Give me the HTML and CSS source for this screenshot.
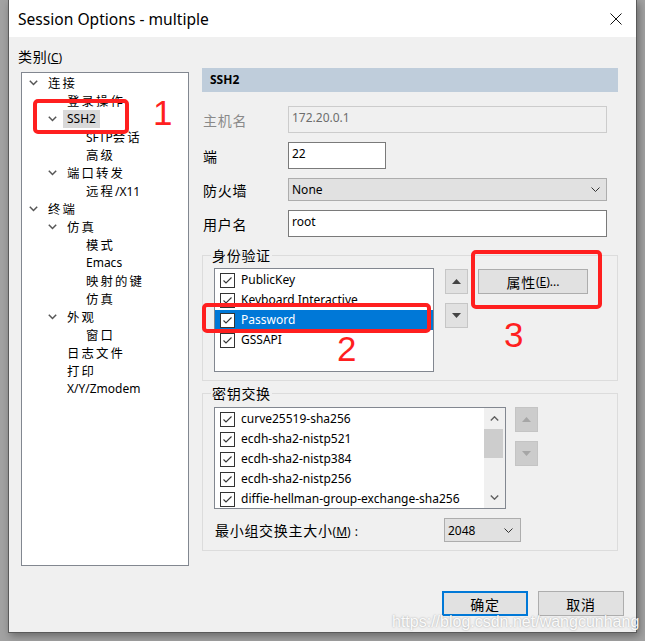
FILE: index.html
```html
<!DOCTYPE html>
<html>
<head>
<meta charset="utf-8">
<link rel="stylesheet" href="styles.css">
</head>
<body>
<div class="dialog">
  <div class="titlebar">
    <span class="title">Session Options - multiple</span>
    <svg class="close" width="12" height="12" viewBox="0 0 12 12"><path d="M0.5 0.5L11.5 11.5M11.5 0.5L0.5 11.5" stroke="#111" stroke-width="1" fill="none"/></svg>
  </div>
  <div class="content">
    <div class="main">
      <div class="leftcol">
        <div class="catlabel"><span class="zh">类别</span>(<u>C</u>)</div>
        <div class="tree">
          <div class="node l0"><span class="tog"><svg width="9" height="6" viewBox="0 0 9 6"><polyline points="0.8,0.8 4.5,4.5 8.2,0.8" fill="none" stroke="#555" stroke-width="1.5"/></svg></span><span class="txt zh">连接</span></div>
          <div class="node l1"><span class="tog"></span><span class="txt zh">登录操作</span></div>
          <div class="node l1"><span class="tog"><svg width="9" height="6" viewBox="0 0 9 6"><polyline points="0.8,0.8 4.5,4.5 8.2,0.8" fill="none" stroke="#555" stroke-width="1.5"/></svg></span><span class="txt sel">SSH2</span></div>
          <div class="node l2"><span class="tog"></span><span class="txt">SFTP<span class="zh">会话</span></span></div>
          <div class="node l2"><span class="tog"></span><span class="txt zh">高级</span></div>
          <div class="node l1"><span class="tog"><svg width="9" height="6" viewBox="0 0 9 6"><polyline points="0.8,0.8 4.5,4.5 8.2,0.8" fill="none" stroke="#555" stroke-width="1.5"/></svg></span><span class="txt zh">端口转发</span></div>
          <div class="node l2"><span class="tog"></span><span class="txt"><span class="zh">远程</span>/X11</span></div>
          <div class="node l0"><span class="tog"><svg width="9" height="6" viewBox="0 0 9 6"><polyline points="0.8,0.8 4.5,4.5 8.2,0.8" fill="none" stroke="#555" stroke-width="1.5"/></svg></span><span class="txt zh">终端</span></div>
          <div class="node l1"><span class="tog"><svg width="9" height="6" viewBox="0 0 9 6"><polyline points="0.8,0.8 4.5,4.5 8.2,0.8" fill="none" stroke="#555" stroke-width="1.5"/></svg></span><span class="txt zh">仿真</span></div>
          <div class="node l2"><span class="tog"></span><span class="txt zh">模式</span></div>
          <div class="node l2"><span class="tog"></span><span class="txt">Emacs</span></div>
          <div class="node l2"><span class="tog"></span><span class="txt zh">映射的键</span></div>
          <div class="node l2"><span class="tog"></span><span class="txt zh">仿真</span></div>
          <div class="node l1"><span class="tog"><svg width="9" height="6" viewBox="0 0 9 6"><polyline points="0.8,0.8 4.5,4.5 8.2,0.8" fill="none" stroke="#555" stroke-width="1.5"/></svg></span><span class="txt zh">外观</span></div>
          <div class="node l2"><span class="tog"></span><span class="txt zh">窗口</span></div>
          <div class="node l1"><span class="tog"></span><span class="txt zh">日志文件</span></div>
          <div class="node l1"><span class="tog"></span><span class="txt zh">打印</span></div>
          <div class="node l1"><span class="tog"></span><span class="txt">X/Y/Zmodem</span></div>
        </div>
      </div>
      <div class="rightcol">
        <div class="header">SSH2</div>
        <div class="form">
          <span class="flabel dim zh">主机名</span>
          <div class="input disabled">172.20.0.1</div>
          <span class="flabel zh">端</span>
          <div class="input port">22</div>
          <span class="flabel zh">防火墙</span>
          <div class="select"><span>None</span><svg width="9" height="5" viewBox="0 0 9 5"><polyline points="0.5,0.5 4.5,4.5 8.5,0.5" fill="none" stroke="#333" stroke-width="1"/></svg></div>
          <span class="flabel zh">用户名</span>
          <div class="input">root</div>
        </div>
        <fieldset class="group g1">
          <legend class="zh">身份验证</legend>
          <div class="grow">
            <div class="list auth">
              <div class="row"><span class="cb"><svg width="13" height="13" viewBox="0 0 13 13"><polyline points="2.5,6.5 5,9 10.5,3.5" fill="none" stroke="#333" stroke-width="1.1"/></svg></span><span class="itxt">PublicKey</span></div>
              <div class="row"><span class="cb"><svg width="13" height="13" viewBox="0 0 13 13"><polyline points="2.5,6.5 5,9 10.5,3.5" fill="none" stroke="#333" stroke-width="1.1"/></svg></span><span class="itxt">Keyboard Interactive</span></div>
              <div class="row selrow"><span class="cb"><svg width="13" height="13" viewBox="0 0 13 13"><polyline points="2.5,6.5 5,9 10.5,3.5" fill="none" stroke="#333" stroke-width="1.1"/></svg></span><span class="itxt">Password</span></div>
              <div class="row"><span class="cb"><svg width="13" height="13" viewBox="0 0 13 13"><polyline points="2.5,6.5 5,9 10.5,3.5" fill="none" stroke="#333" stroke-width="1.1"/></svg></span><span class="itxt">GSSAPI</span></div>
            </div>
            <div class="arrows a1">
              <div class="abtn"><svg width="9" height="5" viewBox="0 0 9 5"><polygon points="0,5 4.5,0 9,5" fill="#444"/></svg></div>
              <div class="abtn"><svg width="9" height="5" viewBox="0 0 9 5"><polygon points="0,0 4.5,5 9,0" fill="#444"/></svg></div>
            </div>
            <div class="btn props"><span class="zh">属性</span>(<u>E</u>)...</div>
          </div>
        </fieldset>
        <fieldset class="group g2">
          <legend class="zh">密钥交换</legend>
          <div class="grow">
            <div class="list kex">
              <div class="items">
                <div class="row"><span class="cb"><svg width="13" height="13" viewBox="0 0 13 13"><polyline points="2.5,6.5 5,9 10.5,3.5" fill="none" stroke="#333" stroke-width="1.1"/></svg></span><span class="itxt">curve25519-sha256</span></div>
                <div class="row"><span class="cb"><svg width="13" height="13" viewBox="0 0 13 13"><polyline points="2.5,6.5 5,9 10.5,3.5" fill="none" stroke="#333" stroke-width="1.1"/></svg></span><span class="itxt">ecdh-sha2-nistp521</span></div>
                <div class="row"><span class="cb"><svg width="13" height="13" viewBox="0 0 13 13"><polyline points="2.5,6.5 5,9 10.5,3.5" fill="none" stroke="#333" stroke-width="1.1"/></svg></span><span class="itxt">ecdh-sha2-nistp384</span></div>
                <div class="row"><span class="cb"><svg width="13" height="13" viewBox="0 0 13 13"><polyline points="2.5,6.5 5,9 10.5,3.5" fill="none" stroke="#333" stroke-width="1.1"/></svg></span><span class="itxt">ecdh-sha2-nistp256</span></div>
                <div class="row"><span class="cb"><svg width="13" height="13" viewBox="0 0 13 13"><polyline points="2.5,6.5 5,9 10.5,3.5" fill="none" stroke="#333" stroke-width="1.1"/></svg></span><span class="itxt">diffie-hellman-group-exchange-sha256</span></div>
              </div>
              <div class="scrollbar">
                <div class="sbtn"><svg width="9" height="5" viewBox="0 0 9 5"><polyline points="0.8,4.5 4.5,0.8 8.2,4.5" fill="none" stroke="#606060" stroke-width="1.4"/></svg></div>
                <div class="track"><div class="thumb"></div></div>
                <div class="sbtn"><svg width="9" height="5" viewBox="0 0 9 5"><polyline points="0.8,0.5 4.5,4.2 8.2,0.5" fill="none" stroke="#606060" stroke-width="1.4"/></svg></div>
              </div>
            </div>
            <div class="arrows a2">
              <div class="abtn dis"><svg width="9" height="5" viewBox="0 0 9 5"><polygon points="0,5 4.5,0 9,5" fill="#a6a6a6"/></svg></div>
              <div class="abtn dis"><svg width="9" height="5" viewBox="0 0 9 5"><polygon points="0,0 4.5,5 9,0" fill="#a6a6a6"/></svg></div>
            </div>
          </div>
          <div class="minrow">
            <span class="minlabel"><span class="zh">最小组交换主大小</span>(<u>M</u>)<span class="colon">:</span></span>
            <div class="select small"><span>2048</span><svg width="9" height="5" viewBox="0 0 9 5"><polyline points="0.5,0.5 4.5,4.5 8.5,0.5" fill="none" stroke="#333" stroke-width="1"/></svg></div>
          </div>
        </fieldset>
      </div>
    </div>
    <div class="buttons">
      <div class="btn ok zh">确定</div>
      <div class="btn zh">取消</div>
    </div>
  </div>
</div>
<div class="mark m1"></div>
<div class="mark m2"></div>
<div class="mark m3"></div>
<div class="num n1">1</div>
<div class="num n2">2</div>
<div class="num n3">3</div>
<div class="watermark">https://blog.csdn.net/wangcunhang</div>
</body>
</html>
```
FILE: styles.css
```css
* { box-sizing: border-box; }
html, body { margin: 0; }
body {
  width: 645px;
  height: 641px;
  background: #a2a2a2;
  position: relative;
  overflow: hidden;
  padding-left: 8px;
  font-family: "Noto Sans", "Noto Sans CJK SC", sans-serif;
  font-size: 12px;
  color: #000;
}
.zh {
  font-family: "Noto Sans CJK SC", sans-serif;
  font-size: 14px;
  letter-spacing: 0.7px;
}
.tree .zh {
  font-size: 12.4px;
  letter-spacing: 2.1px;
}
u { text-decoration: underline; text-underline-offset: 1px; }

.dialog {
  width: 629px;
  height: 633px;
  background: #f0f0f0;
  border: 1px solid #5a5a5a;
  border-top: 0;
  box-shadow: 2px 3px 8px rgba(0, 0, 0, 0.35);
  display: flex;
  flex-direction: column;
}
.titlebar {
  height: 37px;
  flex: none;
  background: #fff;
  display: flex;
  align-items: center;
  justify-content: space-between;
  padding: 0 14px 0 9px;
}
.title { font-size: 15.6px; }
.close { display: block; }

.content { padding: 11px 12px 0 9px; flex: 1; }
.main { display: flex; align-items: flex-start; }
.leftcol { width: 171px; flex: none; }
.catlabel { height: 16px; line-height: 16px; white-space: nowrap; }
.tree {
  margin: 8px 0 0 3px;
  width: 168px;
  height: 494px;
  background: #fff;
  border: 1px solid #828790;
  padding-top: 1px;
}
.node {
  height: 18px;
  line-height: 18px;
  display: flex;
  align-items: center;
  padding-left: 3px;
  white-space: nowrap;
}
.node.l1 { padding-left: 22px; }
.node.l2 { padding-left: 41px; }
.tog {
  width: 16px;
  height: 18px;
  flex: none;
  display: flex;
  align-items: center;
  justify-content: center;
}
.tog svg { display: block; }
.txt { margin-left: 3px; padding: 0 4px; height: 18px; line-height: 18px; }
.txt.sel { background: #d9d9d9; }

.rightcol { margin-left: 13px; padding-top: 20px; width: 417px; flex: none; }
.header {
  width: 416px;
  height: 24px;
  line-height: 24px;
  background: #bfcddb;
  font-weight: bold;
  padding-left: 8px;
}
.form {
  margin-top: 14px;
  display: grid;
  grid-template-columns: 86px 319px;
  row-gap: 9px;
  align-items: center;
}
.flabel { padding-left: 1px; line-height: 18px; }
.flabel.dim { color: #8a8a8a; }
.input {
  height: 27px;
  background: #fff;
  border: 1px solid #7a7a7a;
  padding: 2px 3px;
  line-height: 18px;
}
.input.disabled { background: #f0f0f0; border-color: #cccccc; color: #6d6d6d; }
.input.port { width: 98px; }
.select {
  height: 23px;
  background: #e1e1e1;
  border: 1px solid #adadad;
  padding: 0 6px 0 3px;
  display: flex;
  align-items: center;
  justify-content: space-between;
}
.select svg { display: block; }

.group {
  margin: 0;
  width: 416px;
  min-width: 0;
  border: 1px solid #dcdcdc;
  padding: 5px 0 8px 11px;
}
.group legend {
  padding: 0 1px;
  margin-left: -3px;
  line-height: 16px;
  height: 16px;
}
.g1 { margin-top: 10px; }
.g2 { margin-top: 4px; padding-top: 6px; }
.grow { display: flex; align-items: flex-start; }

.list { background: #fff; border: 1px solid #828790; padding-top: 1px; overflow: hidden; }
.auth { width: 220px; height: 104px; }
.row {
  height: 20px;
  display: flex;
  align-items: center;
  padding-left: 5px;
  white-space: nowrap;
}
.selrow { background: #0078d7; color: #fff; }
.cb {
  width: 15px;
  height: 15px;
  flex: none;
  border: 1px solid #333;
  background: #fff;
  display: flex;
  align-items: center;
  justify-content: center;
}
.cb svg { display: block; }
.itxt { margin-left: 6px; line-height: 18px; }

.arrows { display: flex; flex-direction: column; gap: 9px; }
.a1 { margin: 1px 0 0 11px; }
.a2 { margin-left: 9px; }
.abtn {
  width: 23px;
  height: 25px;
  background: #e1e1e1;
  border: 1px solid #c6c6c6;
  display: flex;
  align-items: center;
  justify-content: center;
}
.abtn svg { display: block; }
.abtn.dis { background: #cccccc; border-color: #c4c4c4; }

.btn {
  height: 25px;
  background: #e1e1e1;
  border: 1px solid #adadad;
  display: flex;
  align-items: center;
  justify-content: center;
  white-space: nowrap;
}
.props { width: 110px; margin: 1px 0 0 10px; }

.kex { width: 292px; height: 102px; display: flex; padding-top: 0; }
.items { flex: 1; padding-top: 1px; }
.scrollbar { width: 21px; flex: none; background: #f0f0f0; display: flex; flex-direction: column; }
.sbtn { height: 21px; display: flex; align-items: center; justify-content: center; }
.sbtn svg { display: block; }
.track { flex: 1; }
.thumb { height: 29px; margin-right: 2px; background: #cdcdcd; }

.minrow { margin-top: 9px; display: flex; align-items: center; padding-left: 1px; }
.minlabel { width: 229px; white-space: nowrap; }
.colon { margin-left: 4px; }
.select.small { width: 77px; height: 24px; padding-right: 7px; }

.buttons { margin-top: 25px; display: flex; justify-content: flex-end; gap: 10px; }
.buttons .btn { width: 86px; }
.btn.ok { border: 2px solid #0078d7; }

.mark { position: absolute; border: 4px solid #ff1f1f; border-radius: 5px; }
.m1 { left: 33px; top: 99px; width: 96px; height: 35px; }
.m2 { left: 202px; top: 303px; width: 229px; height: 30px; }
.m3 { left: 471px; top: 250px; width: 131px; height: 59px; }
.num {
  position: absolute;
  color: #ff1f1f;
  font-family: "Liberation Sans", sans-serif;
  font-size: 35px;
  line-height: 1;
}
.n1 { left: 153px; top: 95px; }
.n2 { left: 337px; top: 331px; }
.n3 { left: 504px; top: 317px; }
.watermark {
  position: absolute;
  left: 392px;
  top: 614px;
  font-family: "Liberation Sans", sans-serif;
  font-size: 16px;
  line-height: 16px;
  color: rgba(255, 255, 255, 0.95);
  text-shadow: 0 0 2px rgba(0, 0, 0, 0.35);
  white-space: nowrap;
}
```
